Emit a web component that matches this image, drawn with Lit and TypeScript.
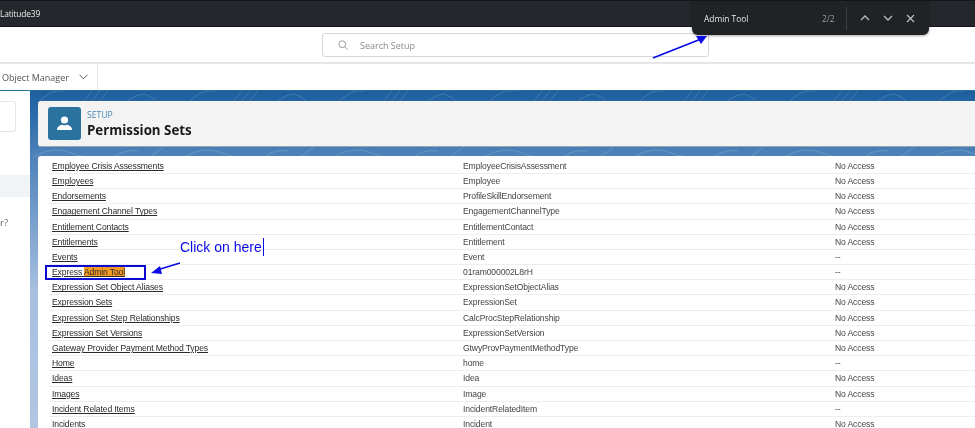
import { LitElement, html, css, svg } from "lit";
import { customElement } from "lit/decorators.js";

const rows = [
  ["Employee Crisis Assessments", "EmployeeCrisisAssessment", "No Access"],
  ["Employees", "Employee", "No Access"],
  ["Endorsements", "ProfileSkillEndorsement", "No Access"],
  ["Engagement Channel Types", "EngagementChannelType", "No Access"],
  ["Entitlement Contacts", "EntitlementContact", "No Access"],
  ["Entitlements", "Entitlement", "No Access"],
  ["Events", "Event", "--"],
  ["Express Admin Tool", "01ram000002L8rH", "--"],
  ["Expression Set Object Aliases", "ExpressionSetObjectAlias", "No Access"],
  ["Expression Sets", "ExpressionSet", "No Access"],
  ["Expression Set Step Relationships", "CalcProcStepRelationship", "No Access"],
  ["Expression Set Versions", "ExpressionSetVersion", "No Access"],
  ["Gateway Provider Payment Method Types", "GtwyProvPaymentMethodType", "No Access"],
  ["Home", "home", "--"],
  ["Ideas", "Idea", "No Access"],
  ["Images", "Image", "No Access"],
  ["Incident Related Items", "IncidentRelatedItem", "--"],
  ["Incidents", "Incident", "No Access"],
];

// faint contour lines over the blue page background
const contours = [0, 150, 300, 450, 600, 750, 900].map(
  (x) => svg`
    <path d="M${x + 8} 12 q12 -14 26 -12 M${x + 52} 12 l10 -12 M${x + 60} 12 l10 -12 M${x + 68} 12 l10 -12 M${x + 96} 12 q8 -8 18 -9 q8 2 14 9" />
    <path d="M${x + 4} 66 q20 -12 38 -4 q14 6 30 4 M${x + 84} 66 q10 -8 24 -6 M${x + 120} 66 l14 -10" />
  `
);

@customElement("app-root")
export class AppRoot extends LitElement {
  static styles = css`
    :host {
      display: block;
      position: relative;
      width: 975px;
      height: 428px;
      overflow: hidden;
      background: #fff;
      font-family: "Liberation Sans", Arial, sans-serif;
      filter: blur(0.3px);
    }
    .topbar {
      height: 27px;
      box-sizing: border-box;
      background: #24282c;
      border-top: 1px solid #14171a;
      border-bottom: 1px solid #14171a;
      color: #e8eaec;
      font: 8.4px/25px "Open Sans", sans-serif;
      letter-spacing: -0.15px;
    }
    .searchrow {
      height: 36px;
      box-sizing: border-box;
      display: flex;
      justify-content: center;
      padding: 6px 0 0 56px;
      border-bottom: 1px solid #e4e4e4;
    }
    .searchbox {
      width: 387px;
      height: 24px;
      box-sizing: border-box;
      display: flex;
      align-items: center;
      gap: 11px;
      padding-left: 15px;
      border: 1px solid #d6d6d6;
      border-radius: 3px;
      color: #8a8a8a;
      font: 9px "Open Sans", sans-serif;
    }
    .searchbox svg {
      flex: none;
    }
    .searchbox span {
      margin-left: 1px;
    }
    .nav {
      height: 27px;
      box-sizing: border-box;
      border-top: 1px solid #e8e8e8;
    }
    .navitem {
      width: 97.5px;
      height: 26px;
      box-sizing: border-box;
      display: flex;
      align-items: center;
      gap: 10px;
      padding-left: 2px;
      border-right: 1px solid #e6e6e6;
      color: #555;
      font: 9px "Open Sans", sans-serif;
    }
    .body {
      display: flex;
      height: 338px;
      border-top: 1px solid #2a6f9b;
      box-sizing: border-box;
    }
    .sidebar {
      width: 30px;
      flex: none;
      padding-top: 10px;
      background: #fff;
      color: #666;
      font: 9.5px "Open Sans", sans-serif;
    }
    .sidebox {
      width: 16px;
      height: 31px;
      box-sizing: border-box;
      border: 1px solid #e6e6e6;
      border-left: 0;
      border-radius: 0 3px 3px 0;
    }
    .sideactive {
      height: 22px;
      margin-top: 43px;
      background: #f1f4f6;
    }
    .sidetext {
      margin-top: 20px;
      line-height: 12px;
    }
    .main {
      position: relative;
      flex: 1;
      padding: 10px 0 0 8px;
      background: linear-gradient(#1c5f9f 0, #2d6cab 8%, #4b80b8 18%, #a8c0e0 60%, #b0c6e2 100%);
    }
    .pattern {
      position: absolute;
      left: 0;
      top: 0;
      width: 945px;
      height: 78px;
      fill: none;
      stroke: #fff;
      stroke-opacity: 0.2;
      stroke-width: 0.8;
    }
    .pagehead {
      position: relative;
      height: 46px;
      box-sizing: border-box;
      display: flex;
      align-items: center;
      gap: 6px;
      padding-left: 10px;
      background: #f3f3f3;
      border-radius: 3px 0 0 3px;
      border-bottom: 1px solid #9aa5b0;
    }
    .pageicon {
      width: 33px;
      height: 33px;
      display: flex;
      align-items: center;
      justify-content: center;
      border-radius: 3px;
      background: #2a739f;
    }
    .eyebrow {
      color: #4b86b4;
      font: 8.6px/12px "Open Sans", sans-serif;
    }
    .title {
      color: #17191c;
      font: 700 13.3px/18px "Open Sans", sans-serif;
    }
    .table {
      position: relative;
      margin-top: 9px;
      height: 272px;
      box-sizing: border-box;
      padding: 2.8px 0 0 11px;
      background: #fff;
      border-radius: 3px 0 0 0;
    }
    .row {
      display: grid;
      grid-template-columns: 411px 372px 1fr;
      height: 15.2px;
      box-sizing: border-box;
      padding-left: 3px;
      border-bottom: 1px solid #eeeeee;
      color: #444;
      font-size: 8.6px;
      letter-spacing: -0.13px;
      line-height: 14.5px;
      white-space: nowrap;
    }
    .name {
      color: #2a2a2a;
      text-decoration: underline;
    }
    mark {
      background: #f59a23;
      color: #2a2a2a;
    }
    .findbar {
      position: absolute;
      left: 692px;
      top: 1px;
      width: 237px;
      height: 34px;
      box-sizing: border-box;
      display: flex;
      align-items: center;
      padding-left: 12px;
      border-radius: 0 0 6px 6px;
      background: #202326;
      box-shadow: 0 1px 3px rgba(0, 0, 0, 0.35);
      color: #e4e6e8;
      font: 8.4px "Open Sans", sans-serif;
    }
    .findquery {
      width: 118px;
    }
    .findcount {
      width: 24px;
      color: #9a9da0;
    }
    .finddiv {
      width: 1px;
      height: 23px;
      margin: 0 6px 0 0;
      background: #3c4044;
    }
    .findbtn {
      width: 23px;
      height: 14px;
      display: flex;
      justify-content: center;
      align-items: center;
    }
    .findbtn svg {
      fill: none;
      stroke: #b8babc;
      stroke-width: 1.3;
    }
    .callout {
      position: absolute;
      left: 180px;
      top: 238px;
      color: #0a0ae6;
      font-size: 14px;
      line-height: 18px;
      border-right: 1px solid #0a0ae6;
      padding-right: 1px;
      height: 18px;
    }
    .selectbox {
      position: absolute;
      left: 45px;
      top: 265px;
      width: 101px;
      height: 15px;
      box-sizing: border-box;
      border: 2px solid #0b0bd0;
    }
    .arrows {
      position: absolute;
      left: 0;
      top: 0;
      width: 975px;
      height: 428px;
      pointer-events: none;
    }
  `;

  renderName(name: string) {
    if (name === "Express Admin Tool") {
      return html`<span class="name">Express <mark>Admin Tool</mark></span>`;
    }
    return html`<span class="name">${name}</span>`;
  }

  render() {
    return html`
      <div class="topbar">Latitude39</div>
      <div class="searchrow">
        <div class="searchbox">
          <svg width="10" height="10" viewBox="0 0 10 10" fill="none" stroke="#9a9a9a" stroke-width="1">
            <circle cx="4.2" cy="4.2" r="3.4" /><path d="M6.8 6.8 9.6 9.6" />
          </svg>
          <span>Search Setup</span>
        </div>
      </div>
      <div class="nav">
        <div class="navitem">
          <span>Object Manager</span>
          <svg width="9" height="6" viewBox="0 0 9 6" fill="none" stroke="#555" stroke-width="1">
            <path d="M.6.8 4.5 4.8 8.4.8" />
          </svg>
        </div>
      </div>
      <div class="body">
        <div class="sidebar">
          <div class="sidebox"></div>
          <div class="sideactive"></div>
          <div class="sidetext">r?</div>
        </div>
        <div class="main">
          <svg class="pattern" viewBox="0 0 945 78">${contours}</svg>
          <div class="pagehead">
            <div class="pageicon">
              <svg width="15" height="15" viewBox="0 0 15 15" fill="#fff">
                <circle cx="7.5" cy="4" r="3.6" />
                <path d="M.6 14c-.4 0-.6-.3-.6-.7C.2 10.600 3 9 5 8.700c1.500.8 3.500.8 5 0 2 .3 4.800 1.900 5 4.600 0 .4-.2.7-.6.7Z" />
              </svg>
            </div>
            <div>
              <div class="eyebrow">SETUP</div>
              <div class="title">Permission Sets</div>
            </div>
          </div>
          <div class="table">
            ${rows.map(
              ([name, api, access]) => html`
                <div class="row">
                  <span>${this.renderName(name)}</span>
                  <span>${api}</span>
                  <span>${access}</span>
                </div>
              `
            )}
          </div>
        </div>
      </div>

      <div class="findbar">
        <span class="findquery">Admin Tool</span>
        <span class="findcount">2/2</span>
        <span class="finddiv"></span>
        <span class="findbtn"><svg width="10" height="6" viewBox="0 0 10 6"><path d="M1 5 5 1 9 5" /></svg></span>
        <span class="findbtn"><svg width="10" height="6" viewBox="0 0 10 6"><path d="M1 1 5 5 9 1" /></svg></span>
        <span class="findbtn"><svg width="9" height="9" viewBox="0 0 9 9"><path d="M1 1 8 8M8 1 1 8" /></svg></span>
      </div>

      <div class="callout">Click on here</div>
      <div class="selectbox"></div>
      <svg class="arrows" viewBox="0 0 975 428">
        <path d="M653 58 701 39" stroke="#0b0be6" stroke-width="1.8" />
        <path d="M707 36 696 36 701 44Z" fill="#0b0be6" />
        <path d="M180 263 157 270" stroke="#0b0be6" stroke-width="1.6" />
        <path d="M151 273 160 266 162 274Z" fill="#0b0be6" />
      </svg>
    `;
  }
}
